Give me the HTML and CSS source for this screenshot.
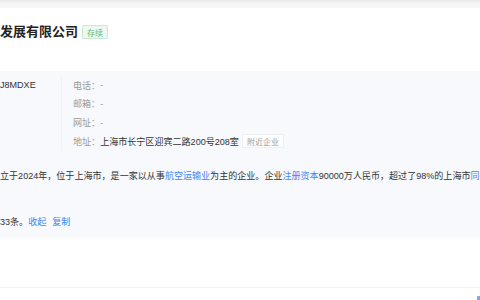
FILE: index.html
```html
<!DOCTYPE html>
<html lang="zh-CN">
<head>
<meta charset="utf-8">
<link rel="stylesheet" href="styles.css">
</head>
<body>
<div class="topbar"></div>
<header class="head">
  <h1 class="title">发展有限公司</h1>
  <span class="tag tag-green">存续</span>
</header>
<section class="panel">
  <div class="info">
    <div class="code">J8MDXE</div>
    <div class="contacts">
      <div class="row"><span class="label">电话：</span><span class="val">-</span></div>
      <div class="row"><span class="label">邮箱：</span><span class="val">-</span></div>
      <div class="row"><span class="label">网址：</span><span class="val">-</span></div>
      <div class="row"><span class="label">地址：</span><span class="addr">上海市长宁区迎宾二路200号208室</span><span class="tag tag-plain">附近企业</span></div>
    </div>
  </div>
  <p class="desc">立于2024年，位于上海市，是一家以从事<a class="link">航空运输业</a>为主的企业。企业<a class="link">注册资本</a>90000万人民币，超过了98%的上海市<a class="link">同</a></p>
  <p class="desc desc2">33条。<a class="link">收起</a><a class="link link-gap">复制</a></p>
</section>
<div class="bottom"></div>
<div class="fab"></div>
</body>
</html>
```

FILE: styles.css
```css
html, body {
  margin: 0;
  padding: 0;
  width: 480px;
  height: 300px;
  overflow: hidden;
  background: #ffffff;
  font-family: "Liberation Sans", "Noto Sans CJK SC", sans-serif;
  font-size: 9.05px;
  color: #333333;
}

.topbar {
  height: 8px;
  background: linear-gradient(#e9e9e9, #f5f5f5 40%, #f6f6f6);
}

.head {
  height: 63px;
  box-sizing: border-box;
  padding-top: 16px;
  display: flex;
  align-items: center;
  gap: 4px;
  align-content: flex-start;
  flex-wrap: wrap;
}

.title {
  margin: 0;
  font-size: 13px;
  line-height: 16px;
  font-weight: bold;
  color: #222222;
}

.tag {
  display: inline-flex;
  align-items: center;
  box-sizing: border-box;
  height: 14px;
  padding: 0 4px;
  font-size: 8px;
  border-radius: 1px;
  white-space: nowrap;
}

.tag-green {
  color: #5cb877;
  background: #eef8f1;
  border: 1px solid #c9ead2;
}

.panel {
  height: 167px;
  box-sizing: border-box;
  padding-top: 5px;
  background: #f7f9fd;
}

.info {
  display: flex;
}

.code {
  width: 61px;
  line-height: 18.67px;
  color: #333333;
}

.contacts {
  border-left: 1px solid #f0f2f6;
  padding-left: 11px;
}

.row {
  display: flex;
  align-items: center;
  height: 18.67px;
  white-space: nowrap;
}

.label {
  color: #999999;
}

.val {
  color: #999999;
}

.addr {
  color: #333333;
}

.tag-plain {
  margin-left: 3px;
  color: #999999;
  background: #ffffff;
  border: 1px solid #eceef2;
}

.desc {
  margin: 16px 0 0 0;
  line-height: 18.67px;
  white-space: nowrap;
}

.desc2 {
  margin-top: 28px;
}

.link {
  color: #3f86f4;
}

.link-gap {
  margin-left: 6px;
}

.bottom {
  height: 49px;
  border-bottom: 1px solid #f3f3f3;
}

.fab {
  position: absolute;
  left: 477px;
  top: 296px;
  width: 6px;
  height: 6px;
  background: #7aa8f0;
  border-radius: 1px;
}
```
